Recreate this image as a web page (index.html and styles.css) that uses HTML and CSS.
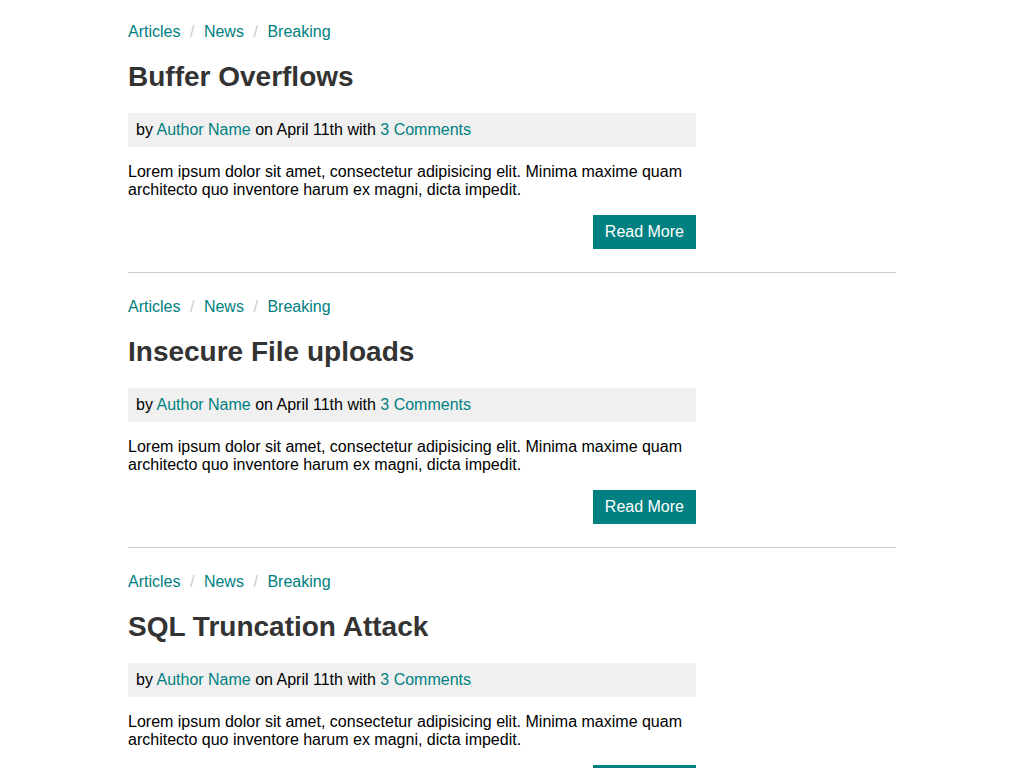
FILE: index.html
```html
<!DOCTYPE html>
<html>
<head>
<meta charset="utf-8">
<link rel="stylesheet" href="styles.css">
</head>
<body>
<main class="container">
  <article class="post">
    <nav class="crumbs"><a href="#">Articles</a><span class="sep">/</span><a href="#">News</a><span class="sep">/</span><a href="#">Breaking</a></nav>
    <h2 class="title">Buffer Overflows</h2>
    <div class="meta">by <a href="#">Author Name</a> on April 11th with <a href="#">3 Comments</a></div>
    <p class="excerpt">Lorem ipsum dolor sit amet, consectetur adipisicing elit. Minima maxime quam architecto quo inventore harum ex magni, dicta impedit.</p>
    <div class="actions"><a class="btn" href="#">Read More</a></div>
  </article>
  <hr class="rule">
  <article class="post">
    <nav class="crumbs"><a href="#">Articles</a><span class="sep">/</span><a href="#">News</a><span class="sep">/</span><a href="#">Breaking</a></nav>
    <h2 class="title">Insecure File uploads</h2>
    <div class="meta">by <a href="#">Author Name</a> on April 11th with <a href="#">3 Comments</a></div>
    <p class="excerpt">Lorem ipsum dolor sit amet, consectetur adipisicing elit. Minima maxime quam architecto quo inventore harum ex magni, dicta impedit.</p>
    <div class="actions"><a class="btn" href="#">Read More</a></div>
  </article>
  <hr class="rule">
  <article class="post">
    <nav class="crumbs"><a href="#">Articles</a><span class="sep">/</span><a href="#">News</a><span class="sep">/</span><a href="#">Breaking</a></nav>
    <h2 class="title">SQL Truncation Attack</h2>
    <div class="meta">by <a href="#">Author Name</a> on April 11th with <a href="#">3 Comments</a></div>
    <p class="excerpt">Lorem ipsum dolor sit amet, consectetur adipisicing elit. Minima maxime quam architecto quo inventore harum ex magni, dicta impedit.</p>
    <div class="actions"><a class="btn" href="#">Read More</a></div>
  </article>
  <hr class="rule">
</main>
</body>
</html>
```
FILE: styles.css
```css
html, body {
  margin: 0;
  padding: 0;
  background: #fff;
}
body {
  font-family: "Liberation Sans", Arial, sans-serif;
  font-size: 16px;
  line-height: 18px;
  color: #000;
}
a {
  color: #008080;
  text-decoration: none;
}
.container {
  width: 768px;
  margin: 0 auto;
  padding-top: 23px;
}
.post {
  width: 568px;
}
.rule + .post {
  padding-top: 25px;
}
.crumbs {
  display: flex;
  height: 18px;
  line-height: 18px;
}
.sep {
  color: #ccc;
  margin: 0 9.5px;
}
.title {
  margin: 20px 0 20px;
  font-size: 28px;
  line-height: 32px;
  font-weight: bold;
  color: #333;
}
.meta {
  background: #f0f0f0;
  padding: 8px;
  line-height: 18px;
}
.excerpt {
  margin: 16px 0;
  line-height: 18px;
}
.actions {
  display: flex;
  justify-content: flex-end;
  margin-bottom: 23px;
}
.btn {
  display: block;
  background: #008080;
  color: #fff;
  padding: 8px 12px;
  line-height: 18px;
}
.rule {
  margin: 0;
  border: 0;
  height: 1px;
  background: #ccc;
}
```
